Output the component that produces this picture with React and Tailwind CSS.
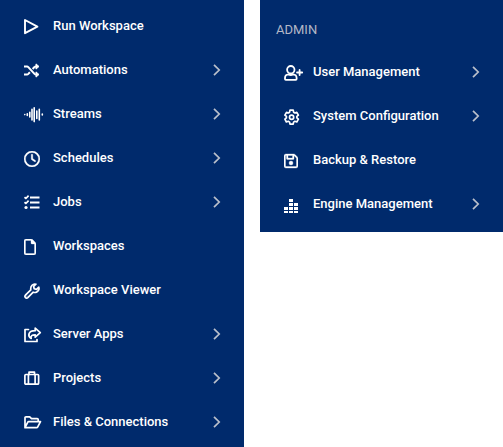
import React from "react";
import { FaRegClock, FaRegFile, FaRegFloppyDisk } from "react-icons/fa6";

const line = {
  viewBox: "0 0 18 16",
  fill: "none",
  stroke: "currentColor",
  strokeWidth: 1.8,
  strokeLinejoin: "round",
  strokeLinecap: "round",
  className: "h-4 w-[18px]",
  "aria-hidden": true,
};

const Play = () => (
  <svg {...line} strokeWidth="1.9"><path d="M1 1v13.200L13.400 7.600z" /></svg>
);

const Shuffle = () => (
  <svg {...line} strokeLinecap="butt" strokeWidth="2">
    <path d="M0 3.500h3c.6 0 .9.200 1.300.6l6.200 6.800c.4.400.7.600 1.300.6H13M0 11.500h3c.6 0 .9-.2 1.300-.6L5.900 9.200M8.600 5.900l1.900-1.800c.4-.4.7-.6 1.300-.6H13" />
    <path d="M12 .9 15 3.500 12 6.100zM12 8.900l3 2.600-3 2.600z" fill="currentColor" strokeWidth="1" />
  </svg>
);

const Streams = () => (
  <svg {...line} viewBox="0 0 20 16" className="h-4 w-5" strokeWidth="1.600">
    <path d="M.8 7.500v.1M3.300 6.800v1.600M5.800 5.200v4.800M8 2.300v10.600M10.200 .8v13.800M12.800 4v7.400M15.300 2.300v10.600M18.300 7.100v.8" />
  </svg>
);

const Jobs = () => (
  <svg {...line} strokeWidth="1.8" strokeLinecap="butt">
    <path d="M6 2.500h9.500M6 7.500h9.500M6 12.500h9.500" />
    <path strokeWidth="1.700" d="M.5 2.200l1.400 1.300L4.600.7M.5 7.200l1.400 1.300L4.600 5.700" />
    <circle cx="2" cy="12.500" r="1.600" fill="currentColor" stroke="none" />
  </svg>
);

const Wrench = () => (
  <svg {...line} strokeWidth="1.700">
    <path d="M6.800 6.900 1.400 12.200a1.700 1.700 0 0 0 2.400 2.400L9.200 9.200c2.300.8 4.700-.3 5.500-2.300.4-1 .4-1.900.1-2.700L12.500 6.400 10.200 5.800 9.600 3.500 11.900 1.200C9 .4 6.200 3 6.800 6.900z" />
    <circle cx="2.900" cy="13" r=".5" fill="currentColor" stroke="none" />
  </svg>
);

const Share = () => (
  <svg {...line} strokeWidth="1.700">
    <path d="M4.500 2.500H1v12h12V12.500" />
    <path d="M11.200 1.200 16.300 5.700 11.200 10.200V7.800C8.200 7.800 6.300 8.600 7.200 11.500 3.100 8.800 4.400 3.700 11.200 3.700z" />
  </svg>
);

const Suitcase = () => (
  <svg {...line} strokeWidth="1.700">
    <rect x="0.900" y="3.500" width="13.700" height="9.700" rx="1" />
    <path d="M4.400 3.500v9.500M11.100 3.500v9.500M5 3.500V1.200h5.500v2.300" />
  </svg>
);

const FolderOpen = () => (
  <svg {...line} strokeWidth="1.700">
    <path d="M1 12V2.800c0-.6.400-1 1-1h3.700L7.500 3.600h5.700c.6 0 1 .4 1 1v2M1 12.500 3.700 7.300c.200-.4.600-.6 1-.6h11.800l-2.900 5.400c-.2.400-.5.600-1 .6H1z" />
  </svg>
);

const UserPlus = () => (
  <svg {...line} viewBox="0 0 20 16" className="h-4 w-5" strokeWidth="1.800">
    <circle cx="6.800" cy="4.700" r="3.700" />
    <path d="M4.500 9.400C2.300 9.600 1 10.900 1 13v1.100c0 .5.300.8.800.8h10c.5 0 .8-.3.800-.8V13c0-2.100-1.300-3.400-3.500-3.600-1.500.8-3.100.8-4.600 0zM13 7.500h5.200M15.600 4.900v5.200" />
  </svg>
);

const Gear = () => (
  <svg {...line} strokeWidth="1.700">
    <path d="M6 1.200h3.200l.4 2 1.300.8 1.900-.7 1.600 2.800-1.500 1.300v1.500l1.500 1.300-1.600 2.800-1.900-.7-1.300.8-.4 2H6l-.4-2-1.300-.8-1.900.7L.9 10.200l1.500-1.300V7.400L.9 6.100l1.600-2.800 1.900.7L5.600 3.200z" />
    <circle cx="7.600" cy="8.200" r="2.100" />
  </svg>
);

const Engine = () => (
  <svg viewBox="0 0 18 16" fill="currentColor" className="h-4 w-[18px]" aria-hidden="true">
    <path d="M5 2h4v3H5zM5 6h4v3H5zM10 6h4v3h-4zM0 10h4v3H0zM5 10h4v3H5zM10 10h4v3h-4zM0 14h4v2H0zM5 14h4v2H5zM10 14h4v2h-4z" />
  </svg>
);

const Chevron = () => (
  <svg viewBox="0 0 8 12" fill="none" stroke="currentColor" strokeWidth="1.700" className="h-3 w-2 text-[#b9bfcb]" aria-hidden="true">
    <path d="M1 .8 6.200 6 1 11.200" />
  </svg>
);

const mainItems = [
  { label: "Run Workspace", icon: <Play /> },
  { label: "Automations", icon: <Shuffle />, expands: true },
  { label: "Streams", icon: <Streams />, expands: true },
  { label: "Schedules", icon: <FaRegClock className="size-4" stroke="currentColor" strokeWidth="10" />, expands: true },
  { label: "Jobs", icon: <Jobs />, expands: true },
  { label: "Workspaces", icon: <FaRegFile className="h-4 w-3" stroke="currentColor" strokeWidth="10" /> },
  { label: "Workspace Viewer", icon: <Wrench /> },
  { label: "Server Apps", icon: <Share />, expands: true },
  { label: "Projects", icon: <Suitcase />, expands: true },
  { label: "Files & Connections", icon: <FolderOpen />, expands: true },
];

const adminItems = [
  { label: "User Management", icon: <UserPlus />, expands: true },
  { label: "System Configuration", icon: <Gear />, expands: true },
  { label: "Backup & Restore", icon: <FaRegFloppyDisk className="h-4 w-3.5" stroke="currentColor" strokeWidth="10" /> },
  { label: "Engine Management", icon: <Engine />, expands: true },
];

function Menu({ items }) {
  return (
    <ul>
      {items.map(({ label, icon, expands }) => (
        <li key={label}>
          <button type="button" className="flex h-11 w-full items-center pr-[23px] pl-6 text-left text-white">
            <span className="flex w-[29px] shrink-0 pt-0.5">{icon}</span>
            <span className="flex-1 whitespace-nowrap">{label}</span>
            {expands && <Chevron />}
          </button>
        </li>
      ))}
    </ul>
  );
}

export default function App() {
  return (
    <main className="grid grid-cols-[244fr_243fr] items-start gap-4 bg-white font-['Roboto',sans-serif] text-[13px] leading-5 font-medium">
      <nav aria-label="Main" className="bg-[#002a6c] pt-1 pb-[3px]">
        <Menu items={mainItems} />
      </nav>
      <nav aria-label="Admin" className="bg-[#002a6c] pt-5 pb-1.5">
        <h2 className="mb-2.5 px-4 font-normal text-[#b3b8c6]">ADMIN</h2>
        <Menu items={adminItems} />
      </nav>
    </main>
  );
}
